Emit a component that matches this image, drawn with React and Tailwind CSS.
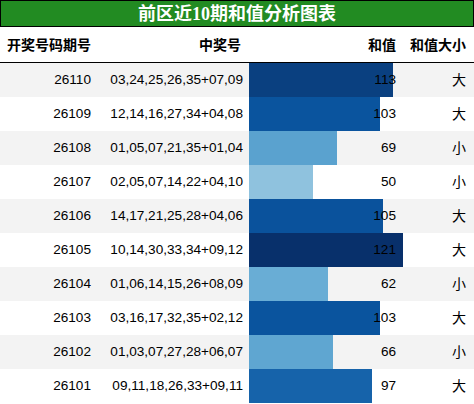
import React from "react";

const rows = [
  ["26110", "03,24,25,26,35+07,09", 113, "大", "#0a4080"],
  ["26109", "12,14,16,27,34+04,08", 103, "大", "#0a549e"],
  ["26108", "01,05,07,21,35+01,04", 69, "小", "#5aa2cf"],
  ["26107", "02,05,07,14,22+04,10", 50, "小", "#8fc2de"],
  ["26106", "14,17,21,25,28+04,06", 105, "大", "#0a529c"],
  ["26105", "10,14,30,33,34+09,12", 121, "大", "#08306b"],
  ["26104", "01,06,14,15,26+08,09", 62, "小", "#69add5"],
  ["26103", "03,16,17,32,35+02,12", 103, "大", "#0a549e"],
  ["26102", "01,03,07,27,28+06,07", 66, "小", "#5fa6d1"],
  ["26101", "09,11,18,26,33+09,11", 97, "大", "#1663aa"],
];

const MAX = 121;
const BAR = 154;

export default function App() {
  return (
    <div className="w-[474px] h-[404px] bg-white overflow-hidden text-black">
      <div
        className="h-[27px] border border-black bg-[#228b22] text-white font-bold text-[18px] flex items-center justify-center leading-none"
        style={{ fontFamily: '"Liberation Serif", "Noto Sans CJK SC", serif' }}
      >
        前区近10期和值分析图表
      </div>
      <div
        className="h-[36px] flex items-center border-b border-black font-bold text-[14px]"
        style={{ fontFamily: '"Noto Sans CJK SC", sans-serif' }}
      >
        <div className="w-[99px] pr-[8px] text-right">开奖号码期号</div>
        <div className="w-[150px] pr-[8px] text-right">中奖号</div>
        <div className="w-[154px] pr-[7px] text-right">和值</div>
        <div className="w-[71px] pr-[8px] text-right">和值大小</div>
      </div>
      {rows.map((r, i) => {
        const w = Math.round((r[2] / MAX) * BAR);
        return (
          <div
            key={r[0]}
            className={`h-[34px] flex items-stretch text-[13.6px] ${i % 2 === 0 ? "bg-[#f3f3f3]" : "bg-white"}`}
            style={{ fontFamily: '"Liberation Sans", "Noto Sans CJK SC", sans-serif' }}
          >
            <div className="w-[99px] pr-[8px] flex items-center justify-end">{r[0]}</div>
            <div className="w-[150px] pr-[6px] flex items-center justify-end">{r[1]}</div>
            <div
              className="w-[154px] pr-[7px] flex items-center justify-end"
              style={{ background: `linear-gradient(90deg, ${r[4]} ${w}px, transparent ${w}px)` }}
            >
              {r[2]}
            </div>
            <div className="w-[71px] pr-[8px] flex items-center justify-end text-[14px]">{r[3]}</div>
          </div>
        );
      })}
    </div>
  );
}
